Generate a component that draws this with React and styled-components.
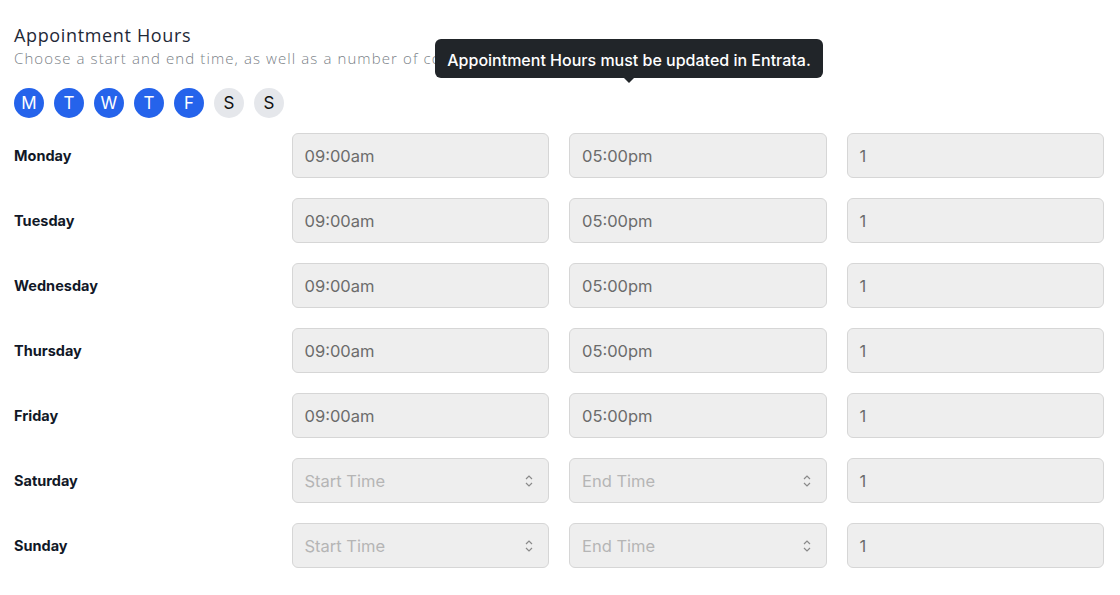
import React from "react";
import styled, { createGlobalStyle } from "styled-components";

const Global = createGlobalStyle`
  html, body { margin: 0; padding: 0; background: #ffffff; }
  body { font-family: Inter, "Liberation Sans", Arial, sans-serif; color: #111827; }
  * { box-sizing: border-box; }
`;

const Page = styled.div`
  padding: 24px 16px 20px 14px;
  position: relative;
`;

const Header = styled.div`
  position: relative;
`;

const Title = styled.h2`
  margin: 0;
  font-family: "Open Sans", sans-serif;
  font-weight: 500;
  font-size: 18px;
  line-height: 22px;
  letter-spacing: 0.65px;
  color: #1f2937;
`;

const Subtitle = styled.p`
  margin: 2px 0 0;
  font-family: "Open Sans", sans-serif;
  font-weight: 300;
  font-size: 15px;
  line-height: 20px;
  letter-spacing: 1.1px;
  color: #7a7f87;
  white-space: nowrap;
`;

const Tooltip = styled.div`
  position: absolute;
  left: 421px;
  top: 15px;
  width: 388px;
  height: 39px;
  padding-top: 2px;
  background: #212529;
  color: #ffffff;
  border-radius: 6px;
  font-family: Inter, "Liberation Sans", Arial, sans-serif;
  font-weight: 500;
  font-size: 16px;
  display: flex;
  align-items: center;
  justify-content: center;
  &::after {
    content: "";
    position: absolute;
    left: 189px;
    bottom: -5px;
    border-left: 5px solid transparent;
    border-right: 5px solid transparent;
    border-top: 5px solid #212529;
  }
`;

const Days = styled.div`
  display: flex;
  gap: 10px;
  margin-top: 20px;
`;

const DayDot = styled.div`
  width: 30px;
  height: 30px;
  border-radius: 50%;
  display: flex;
  align-items: center;
  justify-content: center;
  font-size: 17px;
  background: ${(p) => (p.$active ? "#2563eb" : "#e5e7eb")};
  color: ${(p) => (p.$active ? "#ffffff" : "#111111")};
`;

const Grid = styled.div`
  display: grid;
  grid-template-columns: repeat(4, 1fr);
  column-gap: 20px;
  row-gap: 20px;
  margin-top: 15px;
`;

const DayLabel = styled.div`
  display: flex;
  align-items: center;
  height: 45px;
  font-weight: 700;
  font-size: 14.5px;
  color: #111827;
`;

const Field = styled.div`
  height: 45px;
  border: 1px solid #d6d6d6;
  border-radius: 6px;
  background: #eeeeee;
  display: flex;
  align-items: center;
  justify-content: space-between;
  padding: 0 14px 0 12px;
  font-size: 16.5px;
  color: ${(p) => (p.$placeholder ? "#b5b5b5" : "#6b6b6b")};
`;

const Chevrons = () => (
  <svg width="10" height="14" viewBox="0 0 10 14" fill="none" stroke="#8a8a8a" strokeWidth="1.2">
    <path d="M2 5 L5 2 L8 5" />
    <path d="M2 9 L5 12 L8 9" />
  </svg>
);

const days = [
  ["M", true], ["T", true], ["W", true], ["T", true], ["F", true], ["S", false], ["S", false],
];

const rows = [
  ["Monday", true], ["Tuesday", true], ["Wednesday", true], ["Thursday", true],
  ["Friday", true], ["Saturday", false], ["Sunday", false],
];

export default function App() {
  return (
    <>
      <Global />
      <Page>
        <Header>
          <Title>Appointment Hours</Title>
          <Subtitle>Choose a start and end time, as well as a number of concurrent appointments for each day.</Subtitle>
          <Tooltip>Appointment Hours must be updated in Entrata.</Tooltip>
        </Header>
        <Days>
          {days.map(([d, a], i) => (
            <DayDot key={i} $active={a}>{d}</DayDot>
          ))}
        </Days>
        <Grid>
          {rows.map(([name, set]) => (
            <React.Fragment key={name}>
              <DayLabel>{name}</DayLabel>
              {set ? (
                <>
                  <Field>09:00am</Field>
                  <Field>05:00pm</Field>
                </>
              ) : (
                <>
                  <Field $placeholder>Start Time<Chevrons /></Field>
                  <Field $placeholder>End Time<Chevrons /></Field>
                </>
              )}
              <Field>1</Field>
            </React.Fragment>
          ))}
        </Grid>
      </Page>
    </>
  );
}
